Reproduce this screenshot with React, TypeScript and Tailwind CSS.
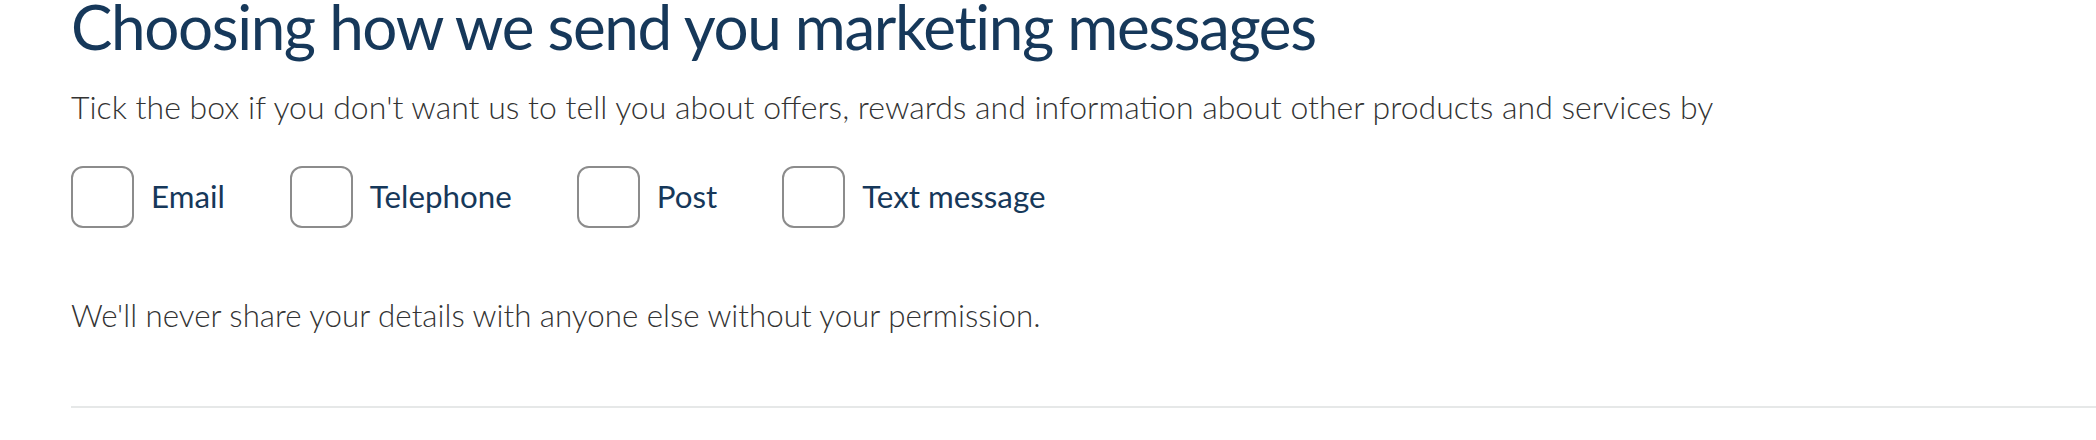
import { useState } from 'react'

const OPTIONS = ['Email', 'Telephone', 'Post', 'Text message']

function Tick({ label }: { label: string }) {
  const [checked, setChecked] = useState(false)
  return (
    <label className="flex items-center gap-[17px] mr-[65px] cursor-pointer">
      <input
        type="checkbox"
        checked={checked}
        onChange={() => setChecked(!checked)}
        className="appearance-none w-[63px] h-[62px] rounded-[12px] border-2 border-[#8c8c8c] bg-white"
      />
      <span className="text-[31.3px] text-[#16385a] leading-none">{label}</span>
    </label>
  )
}

export default function App() {
  return (
    <div
      className="flex flex-col w-full h-[440px] bg-white overflow-hidden pl-[71px]"
      style={{ fontFamily: 'Lato, "Open Sans", sans-serif' }}
    >
      <h1 className="text-[62px] leading-[52px] tracking-[-1.4px] text-[#16385a] font-normal">
        Choosing how we send you marketing messages
      </h1>
      <p className="mt-[39px] text-[32px] leading-none text-[#333333] font-light">
        Tick the box if you don't want us to tell you about offers, rewards and information about other products and services by
      </p>
      <div className="flex items-center mt-[43px]">
        {OPTIONS.map(o => (
          <Tick key={o} label={o} />
        ))}
      </div>
      <p className="mt-[72px] text-[31.3px] leading-none text-[#333333] font-light">
        We'll never share your details with anyone else without your permission.
      </p>
      <div className="mt-[75px] h-[2px] bg-[#e6e8e8]" />
    </div>
  )
}
